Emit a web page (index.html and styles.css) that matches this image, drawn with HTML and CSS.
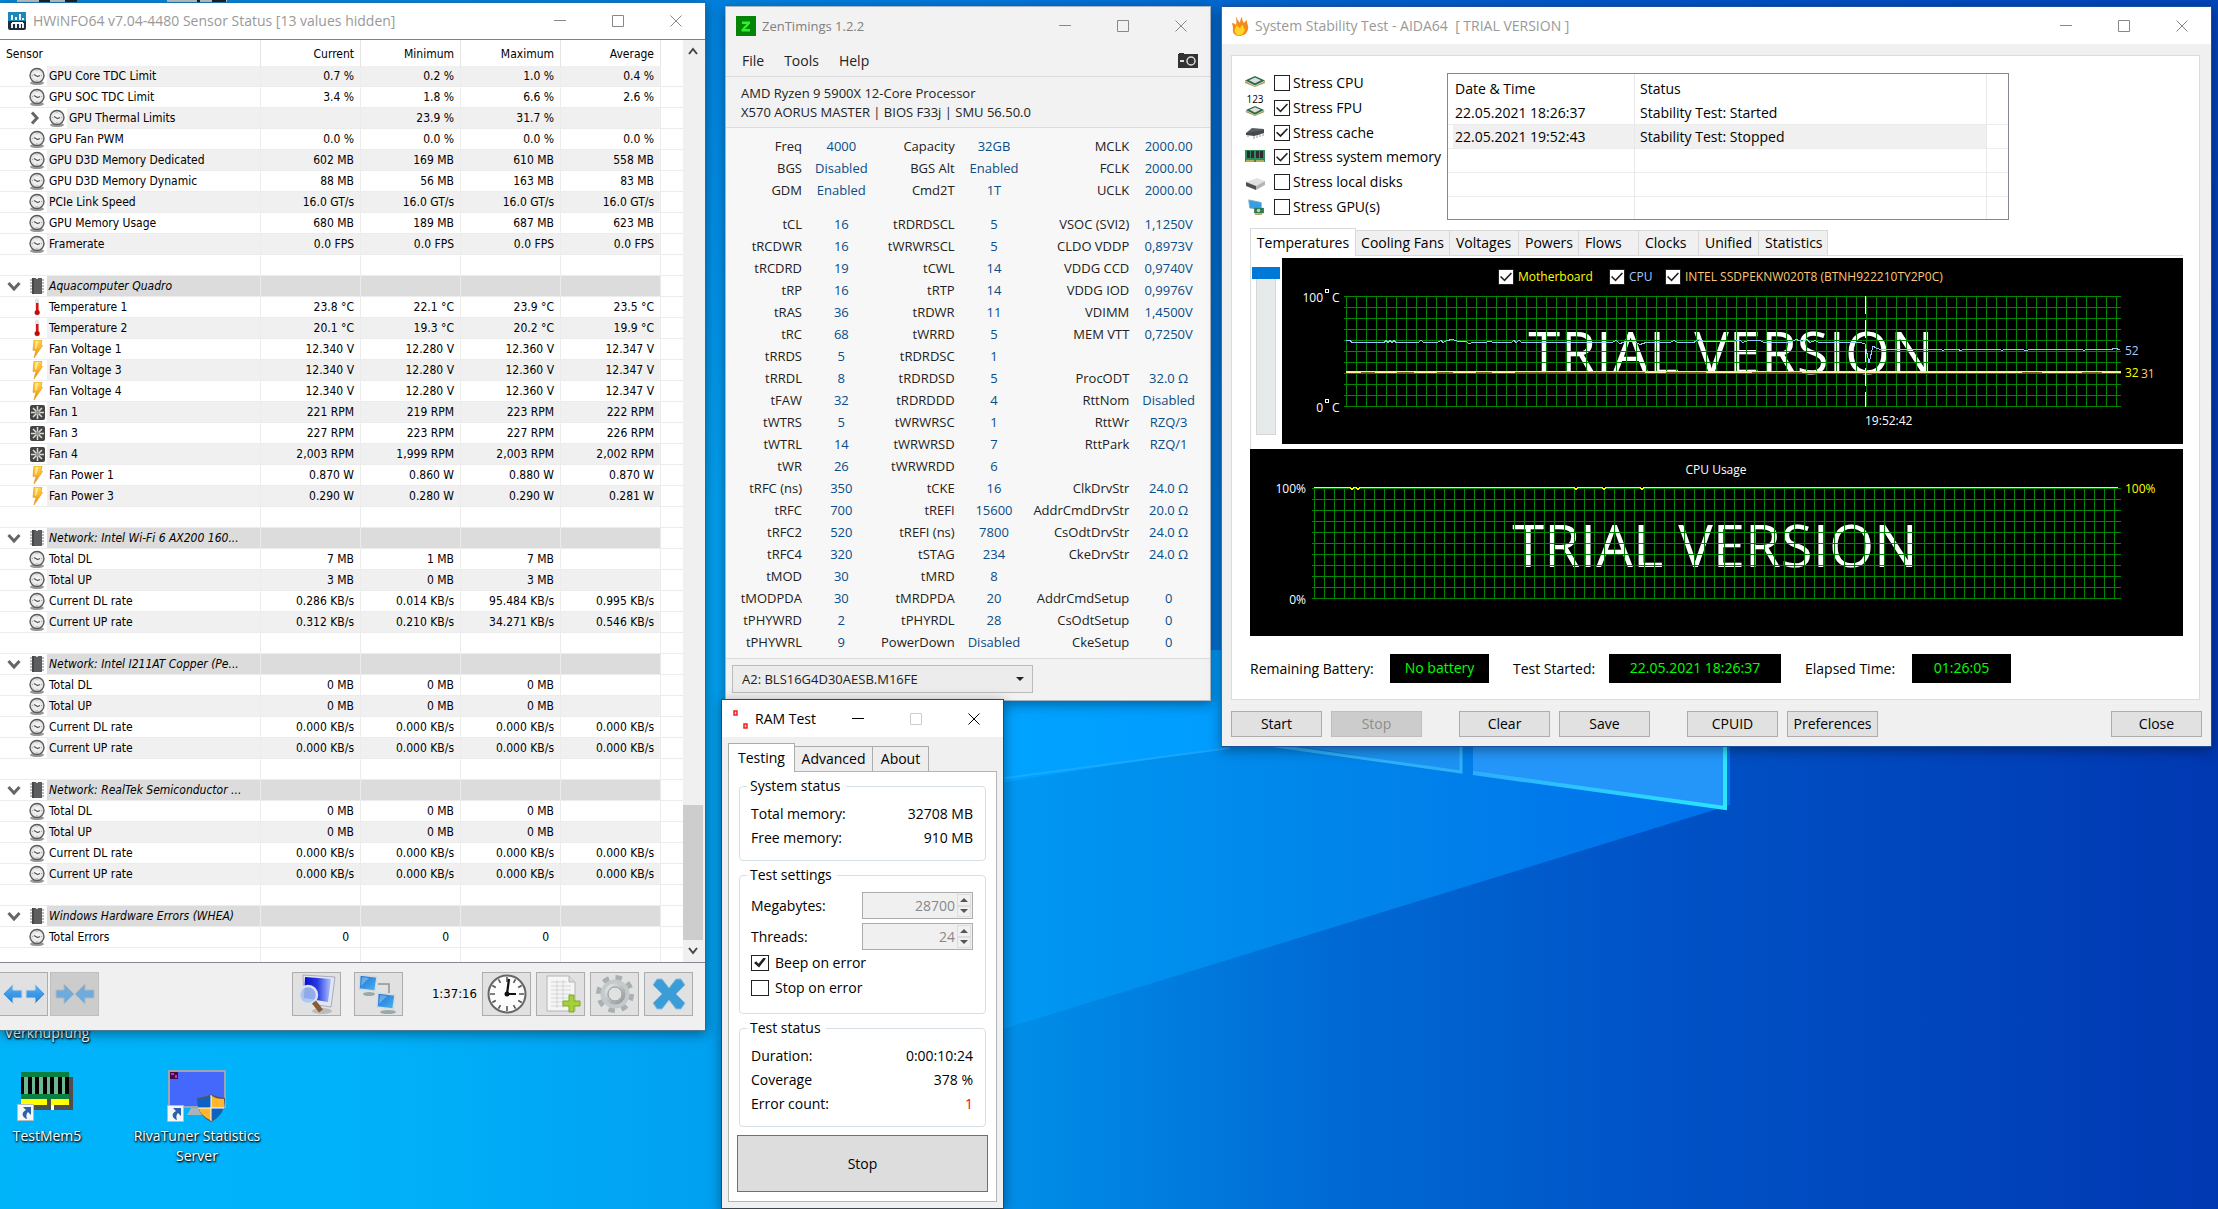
FILE: index.html
```html
<!DOCTYPE html>
<html lang="en">
<head>
<meta charset="utf-8">
<title>Desktop</title>
<link rel="stylesheet" href="styles.css">
</head>
<body>
<svg class="sprites" aria-hidden="true">
  <defs>
    <radialGradient id="gaugeFace"><stop offset="0" stop-color="#fff"/><stop offset="1" stop-color="#dcdcdc"/></radialGradient>
    <linearGradient id="boltFill" x1="0" y1="0" x2="0" y2="1"><stop offset="0" stop-color="#ffd84a"/><stop offset="1" stop-color="#f58a0a"/></linearGradient>
    <linearGradient id="screenFill" x1="0" y1="0" x2="1" y2="1"><stop offset="0" stop-color="#1a6fd0"/><stop offset="1" stop-color="#4fb4f4"/></linearGradient>
    <linearGradient id="deepScreen" x1="0" y1="0" x2="1" y2="0"><stop offset="0" stop-color="#0a0ac8"/><stop offset=".5" stop-color="#2a3ce0"/><stop offset="1" stop-color="#b0c4ff"/></linearGradient>
    <linearGradient id="steel" x1="0" y1="0" x2="1" y2="1"><stop offset="0" stop-color="#e6eaea"/><stop offset="1" stop-color="#8f9696"/></linearGradient>
    <linearGradient id="arrowFill" x1="0" y1="0" x2="0" y2="1"><stop offset="0" stop-color="#5fb2f2"/><stop offset="1" stop-color="#1c82dc"/></linearGradient>
  </defs>
  <symbol id="gauge" viewBox="0 0 16 18"><ellipse cx="8" cy="16" rx="7" ry="2" fill="#999"/><circle cx="8" cy="8.500" r="7" fill="url(#gaugeFace)" stroke="#5a5a5a" stroke-width="1.400"/><path d="M5 7.500 8.500 9.500 11 8.500" fill="none" stroke="#555" stroke-width="1.200"/><path d="M8 3v1M3 8.500h1M13 8.500h-1M8 14v-1" stroke="#aaa"/></symbol>
  <symbol id="chip" viewBox="0 0 16 18"><path d="M1 3h14M1 6h14M1 9h14M1 12h14M1 15h14" stroke="#a8a8a8" stroke-width="1.500"/><rect x="3" y="1" width="10" height="16" fill="#5c5e60"/><rect x="3" y="1" width="2" height="16" fill="#444648"/><path d="M7 1h2v1H7z" fill="#ddd"/></symbol>
  <symbol id="thermo" viewBox="0 0 16 18"><path d="M6 2q2-3 4 0v10.500a3 3 0 1 1-4 0z" fill="#e4e4e4"/><rect x="7" y="5" width="2.500" height="9" fill="#d01818"/><circle cx="8.200" cy="14.500" r="2.500" fill="#c80808"/></symbol>
  <symbol id="bolt" viewBox="0 0 16 18"><path d="M5 0h8l-1 5 1.500.5L5 18l2-8-3 .5z" fill="url(#boltFill)" stroke="#d8931c" stroke-width=".6"/><path d="M6.500 1h3l-2 7-1.500 1z" fill="#ffe98c"/></symbol>
  <symbol id="fan" viewBox="0 0 16 18"><rect x="1" y="2" width="15" height="15" rx="2" fill="#444"/><path d="M8.500 3v13M2 9.500h13M4 5l9 9M13 5l-9 9" stroke="#ddd" stroke-width="1.500"/><circle cx="8.500" cy="9.500" r="2.200" fill="#998"/></symbol>
  <symbol id="chev-down" viewBox="0 0 14 12"><path d="M1.500 3 7 9l5.500-6" fill="none" stroke="#666" stroke-width="3"/></symbol>
  <symbol id="chev-right" viewBox="0 0 12 14"><path d="M3 1.500 8 7l-5 5.500" fill="none" stroke="#666" stroke-width="3"/></symbol>
  <symbol id="win-min" viewBox="0 0 12 12"><path d="M0 5.500h12" stroke="currentColor"/></symbol>
  <symbol id="win-max" viewBox="0 0 12 12"><path d="M.5.5h11v11H.5z" fill="none" stroke="currentColor"/></symbol>
  <symbol id="win-close" viewBox="0 0 12 12"><path d="M.5.5l11 11M11.500.5l-11 11" stroke="currentColor" fill="none"/></symbol>
  <symbol id="shortcut" viewBox="0 0 17 17"><path d="M.5.5h16v16H.5z" fill="#f6f6f6" stroke="#bbb"/><path d="M6 3h8v8l-3-3c-2 2-2 4-1 7-4-1-7-6-1-9z" fill="#2b5fb0"/></symbol>
  <symbol id="cpu-flat" viewBox="0 0 20 12"><path d="M0 6 10 11l10-5v2l-10 4L0 8z" fill="#b39a58"/><path d="M0 5.500 10 1l10 4.500-10 5z" fill="#2e6b4a"/><path d="M4 5.300 10 2.500l6 2.800-6 3z" fill="#dcdfdf"/></symbol>
</svg>

<main class="desktop">
  <svg class="wallpaper" viewBox="0 0 2218 1209" preserveAspectRatio="none" aria-hidden="true">
    <defs>
      <linearGradient id="sky" gradientUnits="userSpaceOnUse" x1="0" y1="0" x2="2218" y2="0">
        <stop offset="0" stop-color="#00b4fa"/><stop offset=".16" stop-color="#00b2fa"/><stop offset=".33" stop-color="#009ff0"/><stop offset=".46" stop-color="#008de8"/><stop offset=".6" stop-color="#006ad4"/><stop offset=".75" stop-color="#0052c6"/><stop offset="1" stop-color="#0038b2"/>
      </linearGradient>
      <linearGradient id="topband" gradientUnits="userSpaceOnUse" x1="0" y1="0" x2="0" y2="500">
        <stop offset="0" stop-color="#0058c8" stop-opacity=".42"/><stop offset="1" stop-color="#0058c8" stop-opacity="0"/>
      </linearGradient>
      <linearGradient id="beam" gradientUnits="userSpaceOnUse" x1="1000" y1="0" x2="1730" y2="0">
        <stop offset="0" stop-color="#0098f2"/><stop offset=".45" stop-color="#0086ea"/><stop offset="1" stop-color="#0070ec"/>
      </linearGradient>
      <linearGradient id="beam2" gradientUnits="userSpaceOnUse" x1="700" y1="0" x2="1240" y2="0">
        <stop offset="0" stop-color="#00a4f8" stop-opacity="0"/><stop offset=".5" stop-color="#00a4ff"/><stop offset="1" stop-color="#009cff"/>
      </linearGradient>
      <linearGradient id="paneEdge" gradientUnits="userSpaceOnUse" x1="1470" y1="0" x2="1726" y2="0">
        <stop offset="0" stop-color="#2cacff"/><stop offset="1" stop-color="#2ae6ff"/>
      </linearGradient>
    </defs>
    <rect width="2218" height="1209" fill="url(#sky)"/>
    <rect width="2218" height="500" fill="url(#topband)"/>
    <path d="M1000 650h730v155L1000 1030z" fill="url(#beam)"/>
    <path d="M700 650h540v95L700 830z" fill="url(#beam2)"/>
    <path d="M1005 778 1230 748" stroke="#2ab0ff" stroke-opacity=".6" stroke-width="2"/>
    <path d="M1262 740h199v32z" fill="#1c92f2"/><path d="M1262 744 1461 772v-30" fill="none" stroke="#30b0f8" stroke-width="3"/>
    <path d="M1473 740h253v69l-253-36z" fill="#2496fa"/><path d="M1473 773 1725 808V740" fill="none" stroke="url(#paneEdge)" stroke-width="4"/>
  </svg>

  <svg class="icon-tops" viewBox="0 0 230 2" aria-hidden="true"><path d="M17 0h60v2H17zM167 0h60v2h-60z" fill="#c4c8c8"/><path d="M39 0h11v2H39zM65 0h12v2H65zM197 0h3v2h-3zM212 0h14v2h-14z" fill="#222"/></svg>

  <a class="shortcut shortcut-hidden" href="#">Verknüpfung</a>
  <a class="shortcut shortcut-mem" href="#">
    <svg viewBox="0 0 60 52"><path d="M8 7h48v33H8z" fill="#4e4e4e"/><path d="M4 2h48v37H4z" fill="#0a8040"/><path d="M4 7h48v17H4z" fill="#6cb890"/><path d="M4 7h3v17H4zM11 7h4v17h-4zM18 7h4v17h-4zM26 7h4v17h-4zM33 7h4v17h-4zM41 7h4v17h-4zM48 7h4v17h-4z" fill="#000"/><path d="M4 29h26v6H4zM34 29h18v6H34z" fill="#ff0"/><path d="M4 35h48v5H4zM30 29h4v6h-4z" fill="#4e4e4e"/><path d="M34 35h3v5h-3z" fill="#fff"/><use href="#shortcut" x="0" y="34" width="17" height="17"/></svg>
    TestMem5</a>
  <a class="shortcut shortcut-riva" href="#">
    <svg viewBox="0 0 60 52"><path d="M1 0h58v38H1z" fill="#9aa6b4"/><path d="M3 2h54v34H3z" fill="#4468fc"/><path d="M3 2h8v7H3z" fill="#401040"/><path d="M4 3h3v2H4zM8 5h2v3H8z" fill="#e020e0"/><path d="M24 38h14l2 7H20z" fill="#a8b4bc"/><path d="M44 24c5 3 9 3 14 4 0 10-3 18-14 24-11-6-14-14-14-24 5-1 9-1 14-4z" fill="#555"/><path d="M44 25.500V38H31v-9q8 0 13-3.500z" fill="#0c62c4"/><path d="M44 25.500V38h13v-9q-8 0-13-3.500z" fill="#ffb52e"/><path d="M31.500 38H44v12.500Q34 46 31.500 38z" fill="#ffb52e"/><path d="M56.500 38H44v12.500Q54 46 56.500 38z" fill="#0c62c4"/><path d="M44 25v26M31 38h26" stroke="#fff"/><use href="#shortcut" x="0" y="35" width="17" height="17"/></svg>
    RivaTuner Statistics Server</a>

  <!-- Sensor status -->
  <section class="window hwinfo" aria-label="HWiNFO64 Sensor Status">
    <header class="titlebar">
      <svg class="app-icon" viewBox="0 0 18 18"><rect width="18" height="18" rx="2" fill="#1c2c3a"/><path d="M0 0h18v9H0z" fill="#1f86b8"/><path d="M4 3v5M8 5v3M12 2v6M15 6v2M4 11v5M8 11v5M12 11v5M15 11v5M4 11h11" stroke="#fff" stroke-width="1.800"/></svg>
      <h1>HWiNFO64 v7.04-4480 Sensor Status [13 values hidden]</h1>
      <div class="controls"><button aria-label="Minimize"><svg><use href="#win-min"/></svg></button><button aria-label="Maximize"><svg><use href="#win-max"/></svg></button><button aria-label="Close"><svg><use href="#win-close"/></svg></button></div>
    </header>
    <div class="sensor-area">
      <table class="sensors">
        <colgroup><col class="c-tree"><col class="c-name"><col class="c-val"><col class="c-val"><col class="c-val"><col class="c-val"><col></colgroup>
        <thead><tr><th colspan="2">Sensor</th><th>Current</th><th>Minimum</th><th>Maximum</th><th>Average</th><th></th></tr></thead>
        <tbody>
          <tr><td><svg><use href="#gauge"/></svg></td><td>GPU Core TDC Limit</td><td>0.7 %</td><td>0.2 %</td><td>1.0 %</td><td>0.4 %</td><td></td></tr>
          <tr><td><svg><use href="#gauge"/></svg></td><td>GPU SOC TDC Limit</td><td>3.4 %</td><td>1.8 %</td><td>6.6 %</td><td>2.6 %</td><td></td></tr>
          <tr><td><svg class="expander"><use href="#chev-right"/></svg></td><td><span class="nested"><svg><use href="#gauge"/></svg></span>GPU Thermal Limits</td><td></td><td>23.9 %</td><td>31.7 %</td><td></td><td></td></tr>
          <tr><td><svg><use href="#gauge"/></svg></td><td>GPU Fan PWM</td><td>0.0 %</td><td>0.0 %</td><td>0.0 %</td><td>0.0 %</td><td></td></tr>
          <tr><td><svg><use href="#gauge"/></svg></td><td>GPU D3D Memory Dedicated</td><td>602 MB</td><td>169 MB</td><td>610 MB</td><td>558 MB</td><td></td></tr>
          <tr><td><svg><use href="#gauge"/></svg></td><td>GPU D3D Memory Dynamic</td><td>88 MB</td><td>56 MB</td><td>163 MB</td><td>83 MB</td><td></td></tr>
          <tr><td><svg><use href="#gauge"/></svg></td><td>PCIe Link Speed</td><td>16.0 GT/s</td><td>16.0 GT/s</td><td>16.0 GT/s</td><td>16.0 GT/s</td><td></td></tr>
          <tr><td><svg><use href="#gauge"/></svg></td><td>GPU Memory Usage</td><td>680 MB</td><td>189 MB</td><td>687 MB</td><td>623 MB</td><td></td></tr>
          <tr><td><svg><use href="#gauge"/></svg></td><td>Framerate</td><td>0.0 FPS</td><td>0.0 FPS</td><td>0.0 FPS</td><td>0.0 FPS</td><td></td></tr>
          <tr><td></td><td></td><td></td><td></td><td></td><td></td><td></td></tr>
          <tr class="group"><td><svg class="toggle"><use href="#chev-down"/></svg><svg><use href="#chip"/></svg></td><td>Aquacomputer Quadro</td><td></td><td></td><td></td><td></td><td></td></tr>
          <tr><td><svg><use href="#thermo"/></svg></td><td>Temperature 1</td><td>23.8 °C</td><td>22.1 °C</td><td>23.9 °C</td><td>23.5 °C</td><td></td></tr>
          <tr><td><svg><use href="#thermo"/></svg></td><td>Temperature 2</td><td>20.1 °C</td><td>19.3 °C</td><td>20.2 °C</td><td>19.9 °C</td><td></td></tr>
          <tr><td><svg><use href="#bolt"/></svg></td><td>Fan Voltage 1</td><td>12.340 V</td><td>12.280 V</td><td>12.360 V</td><td>12.347 V</td><td></td></tr>
          <tr><td><svg><use href="#bolt"/></svg></td><td>Fan Voltage 3</td><td>12.340 V</td><td>12.280 V</td><td>12.360 V</td><td>12.347 V</td><td></td></tr>
          <tr><td><svg><use href="#bolt"/></svg></td><td>Fan Voltage 4</td><td>12.340 V</td><td>12.280 V</td><td>12.360 V</td><td>12.347 V</td><td></td></tr>
          <tr><td><svg><use href="#fan"/></svg></td><td>Fan 1</td><td>221 RPM</td><td>219 RPM</td><td>223 RPM</td><td>222 RPM</td><td></td></tr>
          <tr><td><svg><use href="#fan"/></svg></td><td>Fan 3</td><td>227 RPM</td><td>223 RPM</td><td>227 RPM</td><td>226 RPM</td><td></td></tr>
          <tr><td><svg><use href="#fan"/></svg></td><td>Fan 4</td><td>2,003 RPM</td><td>1,999 RPM</td><td>2,003 RPM</td><td>2,002 RPM</td><td></td></tr>
          <tr><td><svg><use href="#bolt"/></svg></td><td>Fan Power 1</td><td>0.870 W</td><td>0.860 W</td><td>0.880 W</td><td>0.870 W</td><td></td></tr>
          <tr><td><svg><use href="#bolt"/></svg></td><td>Fan Power 3</td><td>0.290 W</td><td>0.280 W</td><td>0.290 W</td><td>0.281 W</td><td></td></tr>
          <tr><td></td><td></td><td></td><td></td><td></td><td></td><td></td></tr>
          <tr class="group"><td><svg class="toggle"><use href="#chev-down"/></svg><svg><use href="#chip"/></svg></td><td>Network: Intel Wi-Fi 6 AX200 160...</td><td></td><td></td><td></td><td></td><td></td></tr>
          <tr><td><svg><use href="#gauge"/></svg></td><td>Total DL</td><td>7 MB</td><td>1 MB</td><td>7 MB</td><td></td><td></td></tr>
          <tr><td><svg><use href="#gauge"/></svg></td><td>Total UP</td><td>3 MB</td><td>0 MB</td><td>3 MB</td><td></td><td></td></tr>
          <tr><td><svg><use href="#gauge"/></svg></td><td>Current DL rate</td><td>0.286 KB/s</td><td>0.014 KB/s</td><td>95.484 KB/s</td><td>0.995 KB/s</td><td></td></tr>
          <tr><td><svg><use href="#gauge"/></svg></td><td>Current UP rate</td><td>0.312 KB/s</td><td>0.210 KB/s</td><td>34.271 KB/s</td><td>0.546 KB/s</td><td></td></tr>
          <tr><td></td><td></td><td></td><td></td><td></td><td></td><td></td></tr>
          <tr class="group"><td><svg class="toggle"><use href="#chev-down"/></svg><svg><use href="#chip"/></svg></td><td>Network: Intel I211AT Copper (Pe...</td><td></td><td></td><td></td><td></td><td></td></tr>
          <tr><td><svg><use href="#gauge"/></svg></td><td>Total DL</td><td>0 MB</td><td>0 MB</td><td>0 MB</td><td></td><td></td></tr>
          <tr><td><svg><use href="#gauge"/></svg></td><td>Total UP</td><td>0 MB</td><td>0 MB</td><td>0 MB</td><td></td><td></td></tr>
          <tr><td><svg><use href="#gauge"/></svg></td><td>Current DL rate</td><td>0.000 KB/s</td><td>0.000 KB/s</td><td>0.000 KB/s</td><td>0.000 KB/s</td><td></td></tr>
          <tr><td><svg><use href="#gauge"/></svg></td><td>Current UP rate</td><td>0.000 KB/s</td><td>0.000 KB/s</td><td>0.000 KB/s</td><td>0.000 KB/s</td><td></td></tr>
          <tr><td></td><td></td><td></td><td></td><td></td><td></td><td></td></tr>
          <tr class="group"><td><svg class="toggle"><use href="#chev-down"/></svg><svg><use href="#chip"/></svg></td><td>Network: RealTek Semiconductor ...</td><td></td><td></td><td></td><td></td><td></td></tr>
          <tr><td><svg><use href="#gauge"/></svg></td><td>Total DL</td><td>0 MB</td><td>0 MB</td><td>0 MB</td><td></td><td></td></tr>
          <tr><td><svg><use href="#gauge"/></svg></td><td>Total UP</td><td>0 MB</td><td>0 MB</td><td>0 MB</td><td></td><td></td></tr>
          <tr><td><svg><use href="#gauge"/></svg></td><td>Current DL rate</td><td>0.000 KB/s</td><td>0.000 KB/s</td><td>0.000 KB/s</td><td>0.000 KB/s</td><td></td></tr>
          <tr><td><svg><use href="#gauge"/></svg></td><td>Current UP rate</td><td>0.000 KB/s</td><td>0.000 KB/s</td><td>0.000 KB/s</td><td>0.000 KB/s</td><td></td></tr>
          <tr><td></td><td></td><td></td><td></td><td></td><td></td><td></td></tr>
          <tr class="group"><td><svg class="toggle"><use href="#chev-down"/></svg><svg><use href="#chip"/></svg></td><td>Windows Hardware Errors (WHEA)</td><td></td><td></td><td></td><td></td><td></td></tr>
          <tr class="count"><td><svg><use href="#gauge"/></svg></td><td>Total Errors</td><td>0</td><td>0</td><td>0</td><td></td><td></td></tr>
        </tbody>
        <tfoot><tr><td></td><td></td><td></td><td></td><td></td><td></td><td></td></tr></tfoot>
      </table>
      <div class="scrollbar">
        <button aria-label="Scroll up"><svg viewBox="0 0 10 8"><path d="M1 7l4-5 4 5" fill="none" stroke="#444" stroke-width="2"/></svg></button>
        <div class="thumb"></div>
        <button aria-label="Scroll down"><svg viewBox="0 0 10 8"><path d="M1 1l4 5 4-5" fill="none" stroke="#444" stroke-width="2"/></svg></button>
      </div>
    </div>
    <footer class="toolbar">
      <button class="first" aria-label="Expand columns"><svg viewBox="0 0 44 36"><path d="M1 18 11 8v6h9v8h-9v6zM43 18 33 8v6h-9v8h9v6z" fill="url(#arrowFill)" stroke="#cfd8e0"/></svg></button>
      <button class="off" aria-label="Shrink columns" disabled><svg viewBox="0 0 44 36"><path d="M21 18 11 8v6H3v8h8v6zM22 18 32 8v6h9v8h-9v6z" fill="#6fabdc" stroke="#b4b8bc"/></svg></button>
      <span class="fill"></span>
      <button class="lookup" aria-label="Sensor details"><svg viewBox="0 0 44 40"><path d="M8 1 40 3l-4 30-27-4z" fill="#dfe6f4" stroke="#aab"/><path d="M10 3 36 5l-3 23-24-4z" fill="url(#deepScreen)"/><ellipse cx="27" cy="37" rx="10" ry="3" fill="#bbb"/><circle cx="13" cy="21" r="9" fill="#a6c4f0" fill-opacity=".85" stroke="#dde2ea" stroke-width="2.500"/><path d="M19 28l7 9" stroke="#8a5a34" stroke-width="5"/></svg></button>
      <button aria-label="Remote sensors"><svg viewBox="0 0 44 40"><path d="M3 1 20 3l-2 14-16-2z" fill="url(#screenFill)" stroke="#d4dade" stroke-width="1.500"/><path d="M5 3 12 4 4 12z" fill="#9cd4fa" fill-opacity=".5"/><path d="M21 19 38 21l-2 14-16-2z" fill="url(#screenFill)" stroke="#d4dade" stroke-width="1.500"/><path d="M23 21l7 1-8 8z" fill="#9cd4fa" fill-opacity=".5"/><ellipse cx="12" cy="20" rx="6" ry="2" fill="#9aa"/><ellipse cx="31" cy="38" rx="8" ry="2" fill="#9aa"/><path d="M21 10h11v9" fill="none" stroke="#8a9298" stroke-width="1.500"/></svg></button>
      <output>1:37:16</output>
      <button aria-label="Reset clock"><svg viewBox="0 0 44 40"><circle cx="22" cy="20" r="18.500" fill="#fdfdfd" stroke="#666" stroke-width="2"/><path d="M22 3v5M22 32v5M5 20h5M34 20h5M13.500 5.300l2 3.500M30.500 5.300l-2 3.500M13.500 34.700l2-3.500M30.500 34.700l-2-3.500M7.300 11.500l3.500 2M36.700 11.500l-3.500 2M7.300 28.500l3.500-2M36.700 28.500l-3.500-2" stroke="#555" stroke-width="1.600"/><path d="M24 5 22 20h9" fill="none" stroke="#111" stroke-width="2.200"/><circle cx="22" cy="20" r="2.500" fill="#111"/></svg></button>
      <button aria-label="Log to file"><svg viewBox="0 0 44 40"><path d="M8 2h22l6 6v29H8z" fill="#f6f6f6" stroke="#b4b4b4"/><path d="M30 2v6h6" fill="#ddd" stroke="#b4b4b4"/><path d="M12 8h16M12 12h20M12 16h20M12 20h20M12 24h20M12 28h20M12 32h12M18 6v28M24 6v28" stroke="#d4d4d4"/><path d="M30 21h5v6h6v5h-6v6h-5v-6h-6v-5h6z" fill="#a4d038" stroke="#7ea820"/></svg></button>
      <button aria-label="Settings"><svg viewBox="0 0 44 40"><circle cx="22" cy="20" r="15.500" fill="none" stroke="#a8b0b0" stroke-width="7" stroke-dasharray="6 6.174"/><circle cx="22" cy="20" r="11" fill="none" stroke="#c4cacc" stroke-width="7"/><circle cx="22" cy="20" r="9" fill="none" stroke="url(#steel)" stroke-width="3"/><circle cx="22" cy="20" r="7" fill="#e1e1e1" stroke="#909898"/></svg></button>
      <button aria-label="Close sensors"><svg viewBox="0 0 44 40"><path d="M10 5h5l7 9 7-9h5l4 6-9 9 9 9-4 6h-5l-7-9-7 9h-5l-4-6 9-9-9-9z" fill="#3c9cd8" stroke="#8cc0e0"/></svg></button>
    </footer>
  </section>

  <!-- Memory timings -->
  <section class="window zen" aria-label="ZenTimings">
    <header class="titlebar">
      <svg class="app-icon" viewBox="0 0 20 20"><rect width="20" height="20" fill="#068406"/><path d="M6 5.500h8v2L9 13h5v2.500H5.500v-2l5-5.500H6z" fill="#30f030"/></svg>
      <h1>ZenTimings 1.2.2</h1>
      <div class="controls"><button aria-label="Minimize"><svg><use href="#win-min"/></svg></button><button aria-label="Maximize"><svg><use href="#win-max"/></svg></button><button aria-label="Close"><svg><use href="#win-close"/></svg></button></div>
    </header>
    <nav class="menu"><button>File</button><button>Tools</button><button>Help</button>
      <button class="camera" aria-label="Screenshot"><svg viewBox="0 0 20 15"><path d="M1 0h5v1h14v14H0V1h1z" fill="#333"/><circle cx="13" cy="8" r="4" fill="#333" stroke="#ddd" stroke-width="1.500"/><path d="M2 7h4v2H2z" fill="#ddd"/></svg></button></nav>
    <div class="cpu-info"><p>AMD Ryzen 9 5900X 12-Core Processor</p><p>X570 AORUS MASTER | BIOS F33j | SMU 56.50.0</p></div>
    <div class="timings-wrap">
      <table class="timings">
        <colgroup><col class="t1"><col class="tv"><col class="t2"><col class="tv"><col class="t3"><col class="tv"></colgroup>
        <tbody>
          <tr><th>Freq</th><td>4000</td><th>Capacity</th><td>32GB</td><th>MCLK</th><td>2000.00</td></tr>
          <tr><th>BGS</th><td>Disabled</td><th>BGS Alt</th><td>Enabled</td><th>FCLK</th><td>2000.00</td></tr>
          <tr><th>GDM</th><td>Enabled</td><th>Cmd2T</th><td>1T</td><th>UCLK</th><td>2000.00</td></tr>
          <tr class="gap"><td colspan="6"></td></tr>
          <tr><th>tCL</th><td>16</td><th>tRDRDSCL</th><td>5</td><th>VSOC (SVI2)</th><td>1,1250V</td></tr>
          <tr><th>tRCDWR</th><td>16</td><th>tWRWRSCL</th><td>5</td><th>CLDO VDDP</th><td>0,8973V</td></tr>
          <tr><th>tRCDRD</th><td>19</td><th>tCWL</th><td>14</td><th>VDDG CCD</th><td>0,9740V</td></tr>
          <tr><th>tRP</th><td>16</td><th>tRTP</th><td>14</td><th>VDDG IOD</th><td>0,9976V</td></tr>
          <tr><th>tRAS</th><td>36</td><th>tRDWR</th><td>11</td><th>VDIMM</th><td>1,4500V</td></tr>
          <tr><th>tRC</th><td>68</td><th>tWRRD</th><td>5</td><th>MEM VTT</th><td>0,7250V</td></tr>
          <tr><th>tRRDS</th><td>5</td><th>tRDRDSC</th><td>1</td><th></th><td></td></tr>
          <tr><th>tRRDL</th><td>8</td><th>tRDRDSD</th><td>5</td><th>ProcODT</th><td>32.0 Ω</td></tr>
          <tr><th>tFAW</th><td>32</td><th>tRDRDDD</th><td>4</td><th>RttNom</th><td>Disabled</td></tr>
          <tr><th>tWTRS</th><td>5</td><th>tWRWRSC</th><td>1</td><th>RttWr</th><td>RZQ/3</td></tr>
          <tr><th>tWTRL</th><td>14</td><th>tWRWRSD</th><td>7</td><th>RttPark</th><td>RZQ/1</td></tr>
          <tr><th>tWR</th><td>26</td><th>tWRWRDD</th><td>6</td><th></th><td></td></tr>
          <tr><th>tRFC (ns)</th><td>350</td><th>tCKE</th><td>16</td><th>ClkDrvStr</th><td>24.0 Ω</td></tr>
          <tr><th>tRFC</th><td>700</td><th>tREFI</th><td>15600</td><th>AddrCmdDrvStr</th><td>20.0 Ω</td></tr>
          <tr><th>tRFC2</th><td>520</td><th>tREFI (ns)</th><td>7800</td><th>CsOdtDrvStr</th><td>24.0 Ω</td></tr>
          <tr><th>tRFC4</th><td>320</td><th>tSTAG</th><td>234</td><th>CkeDrvStr</th><td>24.0 Ω</td></tr>
          <tr><th>tMOD</th><td>30</td><th>tMRD</th><td>8</td><th></th><td></td></tr>
          <tr><th>tMODPDA</th><td>30</td><th>tMRDPDA</th><td>20</td><th>AddrCmdSetup</th><td>0</td></tr>
          <tr><th>tPHYWRD</th><td>2</td><th>tPHYRDL</th><td>28</td><th>CsOdtSetup</th><td>0</td></tr>
          <tr><th>tPHYWRL</th><td>9</td><th>PowerDown</th><td>Disabled</td><th>CkeSetup</th><td>0</td></tr>
        </tbody>
      </table>
    </div>
    <footer class="module">
      <div class="picker"><select aria-label="Memory module"><option>A2: BLS16G4D30AESB.M16FE</option></select><svg viewBox="0 0 8 4"><path d="M0 0h8L4 4z" fill="#222"/></svg></div>
    </footer>
  </section>

  <!-- Stability test -->
  <section class="window aida" aria-label="System Stability Test">
    <header class="titlebar">
      <svg class="app-icon" viewBox="0 0 17 20"><path d="M4 0c1 4 3 5 4 7 0-3 1-5 2-6 0 3 1 5 2 6 1-2 2-2 3-3-1 3 2 5 1 9-1 5-5 7-9 7s-7-3-6-8C1 10 0 8 0 7c2 0 3 1 4 2C5 6 4 3 4 0z" fill="#f58a1c"/><path d="M4 18c-3-4 0-7 1-9 1 2 2 2 3 3 1-2 2-3 3-3 0 3 3 4 1 7-2 4-6 4-8 2z" fill="#ffd628"/></svg>
      <h1>System Stability Test - AIDA64&nbsp; [ TRIAL VERSION ]</h1>
      <div class="controls"><button aria-label="Minimize"><svg><use href="#win-min"/></svg></button><button aria-label="Maximize"><svg><use href="#win-max"/></svg></button><button aria-label="Close"><svg><use href="#win-close"/></svg></button></div>
    </header>
    <div class="aida-panel">
      <div class="aida-top">
        <div class="stress">
          <label><svg viewBox="0 0 20 16"><use href="#cpu-flat" width="20" height="12"/></svg><input type="checkbox">Stress CPU</label>
          <label><svg viewBox="0 0 20 16"><text x="10" y="3" class="digits">123</text><use href="#cpu-flat" y="5" width="20" height="11"/></svg><input type="checkbox" checked>Stress FPU</label>
          <label><svg viewBox="0 0 20 16"><path d="M1 8 7 3l12 1v3l-6 3z" fill="#5a5c60"/><path d="M1 8v2l8 1 10-3V5" fill="#45484c"/><path d="M9 11v3M12 10v3M15 9v3M18 8v3M3 10v2" stroke="#999"/></svg><input type="checkbox" checked>Stress cache</label>
          <label><svg viewBox="0 0 20 16"><path d="M0 1h20v12H0z" fill="#2f8a5e"/><path d="M2 2h3v7H2zM6 2h3v7H6zM11 2h3v7h-3zM15 2h3v7h-3z" fill="#2c2c30"/><path d="M1 11h8v2H1zM11 11h8v2h-8z" fill="#b8a858"/></svg><input type="checkbox" checked>Stress system memory</label>
          <label><svg viewBox="0 0 20 16"><path d="M1 8 12 4l8 3-9 5z" fill="#e2e2e2"/><path d="M1 8l10 4v4L1 12z" fill="#4c524c"/><path d="M11 12l9-5v4l-9 5z" fill="#b4b4b4"/></svg><input type="checkbox">Stress local disks</label>
          <label><svg viewBox="0 0 20 18"><path d="M3 1 17 4v8L4 10z" fill="#34a0e4" stroke="#7aa8c8"/><path d="M9 10h11v6H9z" fill="#2e7a50"/><circle cx="14" cy="13" r="2" fill="#bcd"/><path d="M10 16h8v2h-8z" fill="#b8a858"/></svg><input type="checkbox">Stress GPU(s)</label>
        </div>
        <div class="log">
          <table>
            <colgroup><col class="l1"><col class="l2"><col></colgroup>
            <thead><tr><th>Date &amp; Time</th><th>Status</th><th></th></tr></thead>
            <tbody>
              <tr><td>22.05.2021 18:26:37</td><td>Stability Test: Started</td><td></td></tr>
              <tr class="sel"><td>22.05.2021 19:52:43</td><td>Stability Test: Stopped</td><td></td></tr>
              <tr><td></td><td></td><td></td></tr>
              <tr><td></td><td></td><td></td></tr>
              <tr><td></td><td></td><td></td></tr>
            </tbody>
          </table>
        </div>
      </div>
      <div class="tabs" role="tablist">
        <button role="tab" class="active">Temperatures</button><button role="tab" class="w94">Cooling Fans</button><button role="tab" class="w69">Voltages</button><button role="tab" class="w60">Powers</button><button role="tab" class="w60">Flows</button><button role="tab" class="w60">Clocks</button><button role="tab" class="w60">Unified</button><button role="tab" class="w69">Statistics</button>
      </div>
      <div class="graph-page">
        <div class="slider"><div class="slider-thumb"></div><div class="slider-track"></div></div>
        <div class="graph">
          <div class="legend">
            <label class="l-mb"><input type="checkbox" checked>Motherboard</label>
            <label class="l-cpu"><input type="checkbox" checked>CPU</label>
            <label class="l-ssd"><input type="checkbox" checked>INTEL SSDPEKNW020T8 (BTNH922210TY2P0C)</label>
          </div>
          <svg class="plot" viewBox="0 0 901 156">
            <defs>
              <pattern id="grid1" patternUnits="userSpaceOnUse" x="64" y="8" width="10" height="11"><path d="M0 0h10v1H1v10H0z" fill="#008600"/></pattern>
              <pattern id="rows1" patternUnits="userSpaceOnUse" x="0" y="8" width="10" height="11"><path d="M0 0h10v1H0z" fill="#008600"/></pattern>
            </defs>
            <text x="449" y="86" class="trial">TRIAL VERSION</text>
            <rect x="64" y="8" width="771" height="111" fill="url(#grid1)"/>
            <rect x="62" y="8" width="777" height="111" fill="url(#rows1)"/>
            <path d="M583.500 8v111" stroke="#fff" stroke-dasharray="18 6"/>
            <path d="M64 84.500h775" stroke="#fff0a0"/>
            <path d="M79 84.500h14M115 84.500h17M155 84.500h16M194 84.500h16M233 84.500h130M384 84.500h40M470 84.500h50M740 84.500h20M800 84.500h20" stroke="#7a6a20"/>
            <path d="M64 83.500h775" stroke="#ff0"/>
            <path d="M64 52.500h4L70 54.500H102L104 52.500 106 54.500 108 52.500 110 54.500 112 52.500 114 54.500H136L139 52.500 142 54.500H155L159 52.500 161 54.500 165 52.500 170 51.500 177 53.500H184L187 55.500 192 54.500H202L208 53.500 212 54.500H229L232 52.500 234 54.500 237 52.500 240 54.500H330L334 52.500 338 55.500 344 53.500H352L358 56.500 364 54.500H388L392 52.500 396 54.500H412L416 51.500 422 53.500H450L458 52.500 461 54.500 466 52.500H478L482 54.500H508L514 51.500 520 53.500 525 51.500 528 54.500 533 52.500 537 54.500H578L583 56 587 75 591 58 594 60 598 61.500H659L661 62.500 663 61.500H676L679 62.500 681 61.500H718L720 62.500 722 61.500H740L744 62.500 748 61.500H800L802 62.500 804 61.500H828L833 60.500 838 61.500" fill="none" stroke="#9cc4ff"/>
            <g class="axis"><text x="41" y="14" class="end">100</text><text x="50" y="14">C</text><text x="41" y="124" class="end">0</text><text x="50" y="124">C</text><circle cx="45" cy="3" r="2" fill="none" stroke="#fff"/><circle cx="45" cy="113" r="2" fill="none" stroke="#fff"/>
            <text x="583" y="137">19:52:42</text><text x="843" y="67" class="blue">52</text><text x="843" y="89" class="yellow">32</text><text x="859" y="90" class="orange">31</text></g>
          </svg>
        </div>
      </div>
      <svg class="plot usage" viewBox="0 0 933 187">
        <defs>
          <pattern id="grid2" patternUnits="userSpaceOnUse" x="64" y="39" width="10" height="11"><path d="M0 0h10v1H1v10H0z" fill="#008600"/></pattern>
          <pattern id="rows2" patternUnits="userSpaceOnUse" x="0" y="39" width="10" height="11"><path d="M0 0h10v1H0z" fill="#008600"/></pattern>
        </defs>
        <text x="465" y="118" class="trial">TRIAL VERSION</text>
        <rect x="64" y="39" width="801" height="111" fill="url(#grid2)"/>
        <rect x="62" y="39" width="809" height="111" fill="url(#rows2)"/>
        <path d="M64 38.500h36l2 2 2-2h2l2 2 2-2h214l2 2 2-2h24l2 2 2-2h34l2 2 2-2h474" fill="none" stroke="#ff0"/>
        <g class="axis"><text x="466" y="25" class="mid">CPU Usage</text><text x="56" y="44" class="end">100%</text><text x="56" y="155" class="end">0%</text><text x="875" y="44" class="yellow">100%</text></g>
      </svg>
      <div class="run-info">
        <span class="i1">Remaining Battery:</span><output class="o1">No battery</output>
        <span class="i2">Test Started:</span><output class="o2">22.05.2021 18:26:37</output>
        <span class="i3">Elapsed Time:</span><output class="o1">01:26:05</output>
      </div>
    </div>
    <footer class="aida-buttons">
      <div><button>Start</button><button disabled>Stop</button></div>
      <div><button>Clear</button><button>Save</button></div>
      <div><button>CPUID</button><button>Preferences</button></div>
      <button class="close">Close</button>
    </footer>
  </section>

  <!-- RAM test -->
  <section class="window ram" aria-label="RAM Test">
    <header class="titlebar">
      <svg class="app-icon" viewBox="0 0 20 20"><path d="M2 2h3v4H2zM12 15h3v4h-3z" fill="#fcc" stroke="#f02020" stroke-width="1.500"/></svg>
      <h1>RAM Test</h1>
      <div class="controls"><button aria-label="Minimize"><svg><use href="#win-min"/></svg></button><button aria-label="Maximize" disabled><svg><use href="#win-max"/></svg></button><button aria-label="Close"><svg><use href="#win-close"/></svg></button></div>
    </header>
    <div class="ram-body">
      <div class="ram-tabs" role="tablist"><button role="tab" class="active">Testing</button><button role="tab" class="adv">Advanced</button><button role="tab" class="abt">About</button></div>
      <div class="ram-page">
        <fieldset class="f-sys"><legend>System status</legend>
          <p><span>Total memory:</span><span>32708 MB</span></p>
          <p><span>Free memory:</span><span>910 MB</span></p>
        </fieldset>
        <fieldset class="f-set"><legend>Test settings</legend>
          <div class="fields">
            <div class="field"><label for="mb">Megabytes:</label><span class="spin"><input id="mb" value="28700" disabled><span class="arrows"><button aria-label="More megabytes" disabled><svg viewBox="0 0 8 4"><path d="M0 4h8L4 0z"/></svg></button><button aria-label="Fewer megabytes" disabled><svg viewBox="0 0 8 4"><path d="M0 0h8L4 4z"/></svg></button></span></span></div>
            <div class="field"><label for="th">Threads:</label><span class="spin"><input id="th" value="24" disabled><span class="arrows"><button aria-label="More threads" disabled><svg viewBox="0 0 8 4"><path d="M0 4h8L4 0z"/></svg></button><button aria-label="Fewer threads" disabled><svg viewBox="0 0 8 4"><path d="M0 0h8L4 4z"/></svg></button></span></span></div>
          </div>
          <label class="tick"><input type="checkbox" class="bold" checked>Beep on error</label>
          <label class="tick"><input type="checkbox" class="bold">Stop on error</label>
        </fieldset>
        <fieldset class="f-stat"><legend>Test status</legend>
          <p><span>Duration:</span><span>0:00:10:24</span></p>
          <p><span>Coverage</span><span>378 %</span></p>
          <p><span>Error count:</span><span class="err">1</span></p>
        </fieldset>
        <button class="stop">Stop</button>
      </div>
    </div>
  </section>
</main>
</body>
</html>
```
FILE: styles.css
```css
* { box-sizing: border-box; }
html, body { height: 100%; }
body { margin: 0; font-family: "Open Sans", "Noto Sans", sans-serif; font-size: 14px; line-height: 20px; color: #000; }
h1, p { margin: 0; font-size: inherit; font-weight: 400; }
button, input, select { font: inherit; color: inherit; }
button { padding: 0; border: 0; background: none; }
svg { display: block; flex: none; }
.sprites { position: absolute; width: 0; height: 0; }

.desktop { position: relative; width: 100%; height: 100vh; overflow: hidden; background: #008de8; }
.wallpaper { position: absolute; inset: 0; width: 100%; height: 100%; }
.icon-tops { position: absolute; left: 0; top: 0; width: 230px; height: 2px; }

.shortcut { position: absolute; width: 132px; display: flex; flex-direction: column; align-items: center; text-align: center; color: #fff; text-decoration: none; text-shadow: 1px 1px 2px #000, 0 1px 2px #000; }
.shortcut svg { width: 60px; height: 52px; margin-bottom: 4px; }
.shortcut-hidden { left: -19px; top: 1023px; }
.shortcut-mem { left: -19px; top: 1070px; }
.shortcut-riva { left: 131px; top: 1070px; }

/* Window chrome */
.window { position: absolute; display: flex; flex-direction: column; box-shadow: 0 3px 12px rgba(0, 0, 0, .4); background: #f0f0f0; }
.titlebar { display: flex; align-items: center; height: 37px; background: #fff; color: #999; }
.titlebar h1 { flex: 1; white-space: nowrap; }
.titlebar .app-icon { width: 20px; height: 20px; }
.controls { display: flex; height: 100%; }
.controls button { width: 58px; display: grid; place-items: center; color: #888; }
.controls svg { width: 12px; height: 12px; }

input[type="checkbox"] { appearance: none; flex: none; width: 16px; height: 16px; margin: 0; border: 1px solid #222; background: #fff; display: grid; place-items: center; }
input[type="checkbox"]:checked::before { content: ""; width: 12px; height: 10px; background: #222; clip-path: polygon(0 50%, 10% 40%, 37% 72%, 90% 5%, 100% 15%, 38% 95%); }
input.bold { width: 18px; }
input.bold:checked::before { clip-path: polygon(0 55%, 18% 38%, 38% 62%, 80% 0, 100% 10%, 42% 100%); }

/* HWiNFO */
.hwinfo { left: 0; top: 2px; width: 706px; border: 1px solid #1870b0; border-left: 0; border-bottom-color: #4a7890; font-family: "DejaVu Sans Condensed", "DejaVu Sans", sans-serif; font-size: 12px; }
.hwinfo .titlebar { border-bottom: 1px solid #7a8290; font-family: "Open Sans", "Noto Sans", sans-serif; font-size: 14px; gap: 7px; padding-left: 8px; }
.hwinfo .titlebar .app-icon { width: 18px; height: 18px; }
.sensor-area { display: flex; border-bottom: 1px solid #828790; background: #fff; }
.sensors { flex: 1; table-layout: fixed; width: 100%; border-spacing: 0; }
.c-tree { width: 47px; }
.c-name { width: 214px; }
.c-val { width: 100px; }
.sensors th { height: 26px; padding: 2px 6px 0 0; font-weight: 400; text-align: right; border-right: 1px solid #e5e5e5; line-height: 20px; }
.sensors th:first-child { text-align: left; padding-left: 6px; }
.sensors th:last-child, .sensors td:last-child, .sensors td:first-child { border-right: 0; }
.sensors td { height: 21px; padding: 0 6px 0 0; text-align: right; white-space: nowrap; border-right: 1px solid #ececec; border-bottom: 1px solid #ececec; line-height: 20px; }
.sensors td:first-child { padding: 0; position: relative; }
.sensors td:first-child svg { width: 16px; height: 18px; margin-left: 29px; }
.sensors td:first-child svg.expander { width: 12px; height: 14px; }
.sensors td:first-child svg.toggle { position: absolute; left: 7px; top: 4px; width: 14px; height: 12px; margin: 0; }
.sensors td:nth-child(2) { text-align: left; padding: 0 0 0 2px; }
.sensors tbody tr:nth-child(odd) td:nth-child(n+2):nth-child(-n+6) { background: #f0f0f0; }
.sensors tbody tr.group td:nth-child(n+2):nth-child(-n+6) { background: #dcdcdc; }
.group td:nth-child(2) { font-style: italic; }
.sensors .count td { padding-right: 11px; }
.sensors tfoot td { height: 14px; border-bottom: 0; line-height: 10px; }
.nested { display: inline-block; vertical-align: top; width: 20px; height: 20px; margin: 0 2px 0 -2px; padding: 1px 0 0 2px; background: #fff; }
.nested svg { width: 16px; height: 18px; }
.scrollbar { width: 22px; padding-right: 2px; display: flex; flex-direction: column; background: #f0f0f0; }
.scrollbar button { height: 22px; display: grid; place-items: center; }
.scrollbar button:first-child { margin-bottom: auto; }
.scrollbar svg { width: 10px; height: 8px; }
.thumb { height: 135px; background: #cdcdcd; }
.toolbar { display: flex; align-items: center; gap: 5px; padding: 9px 12px 14px 0; font-size: 13px; }
.toolbar button { width: 49px; height: 44px; border: 1px solid #adadad; background: #e1e1e1; display: grid; place-items: center; }
.toolbar button svg { width: 44px; height: 40px; }
.toolbar .first { width: 48px; border-left: 0; margin-right: -3px; }
.toolbar .off { background: #ccc; border-color: #bfbfbf; }
.toolbar .lookup { margin-right: 8px; }
.toolbar output { width: 69px; text-align: right; }
.fill { flex: 1; }

/* ZenTimings */
.zen { left: 725px; top: 6px; width: 486px; border: 1px solid #a8b4c0; background: #f2f2f2; font-size: 13px; color: #222; }
.zen .titlebar { height: 38px; gap: 6px; padding-left: 10px; background: #f2f2f2; color: #808080; font-size: 13px; }
.menu { display: flex; align-items: center; height: 32px; border-bottom: 1px solid #dcdcdc; padding: 0 12px 0 16px; gap: 20px; font-size: 14px; }
.menu .camera { margin-left: auto; }
.camera svg { width: 20px; height: 15px; }
.cpu-info { padding: 7px 15px 5px; line-height: 19px; border-bottom: 1px solid #dcdcdc; }
.timings-wrap { padding: 7px 0 5px; background: #f7f7f7; border-bottom: 1px solid #dcdcdc; }
.timings { table-layout: fixed; border-spacing: 0; width: 478px; }
.t1 { width: 80px; }
.t2 { width: 82px; }
.t3 { width: 104px; }
.timings th { height: 22px; padding: 0 4px 0 0; font-weight: 400; text-align: right; white-space: nowrap; }
.timings td { height: 22px; padding: 0; text-align: center; color: #0b4c86; white-space: nowrap; }
.timings .gap td { height: 12px; }
.module { padding: 6px 6px 7px; }
.picker { position: relative; width: 301px; }
.picker select { appearance: none; display: block; width: 100%; height: 28px; padding: 0 9px; border: 1px solid #bbb; border-radius: 0; background: #ececec; font-size: 13px; }
.picker svg { position: absolute; right: 9px; top: 12px; width: 8px; height: 4px; }

/* AIDA64 */
.aida { left: 1221px; right: 6px; top: 6px; border: 1px solid #1c4f9c; border-left-color: #1878cc; }
.aida .titlebar { gap: 6px; padding-left: 10px; }
.aida .titlebar .app-icon { width: 17px; }
.aida-panel { margin: 11px 11px 0 9px; padding: 15px 16px 16px 18px; border: 1px solid #dcdcdc; background: #fff; }
.aida-top { display: flex; margin-left: -5px; }
.stress { width: 202px; height: 148px; display: grid; grid-auto-rows: 1fr; }
.stress label { display: flex; align-items: center; gap: 3px; white-space: nowrap; }
.stress svg { width: 20px; height: 16px; margin-right: 6px; overflow: visible; }
.digits { font-size: 10px; text-anchor: middle; }
.log { flex: 1; margin: 2px 174px 0 0; height: 147px; border: 1px solid #828790; overflow: hidden; }
.log table { width: 100%; table-layout: fixed; border-spacing: 0; }
.l1 { width: 187px; }
.l2 { width: 352px; }
.log th, .log td { height: 24px; padding: 0 0 0 5px; text-align: left; font-weight: 400; border-right: 1px solid #e8e8e8; white-space: nowrap; }
.log td { border-bottom: 1px solid #ececec; }
.log th { height: 27px; padding-top: 2px; }
.log th:first-child, .log td:first-child { padding-left: 7px; }
.log th:last-child, .log td:last-child { border-right: 0; }
.log .sel td:not(:last-child) { background: #f0f0f0; }
.log .sel td:first-child { box-shadow: inset 5px 0 #fff; }
.tabs { display: flex; align-items: flex-end; height: 27px; margin-top: 8px; }
.tabs button { height: 25px; border: 1px solid #d9d9d9; border-left: 0; border-bottom: 0; background: #f0f0f0; line-height: 20px; }
.tabs .active { width: 106px; height: 28px; margin-bottom: -1px; border-left: 1px solid #d9d9d9; background: #fff; position: relative; }
.w94 { width: 94px; }
.tabs .w69 { width: 69px; padding-left: 6px; text-align: left; }
.tabs .w60 { width: 60px; padding-left: 6px; text-align: left; }
.graph-page { display: flex; border-top: 1px solid #dcdcdc; border-left: 1px solid #dcdcdc; padding: 2px 0 5px; }
.slider { width: 31px; padding: 9px 2px 9px 1px; display: flex; flex-direction: column; }
.slider-thumb { height: 12px; background: #0078d7; }
.slider-track { flex: 1; margin: 0 4px; border: 1px solid #d6d6d6; border-top: 0; background: #e7eaea; }
.graph { flex: 1; background: #000; }
.legend { display: flex; height: 30px; padding: 8px 0 0 216px; font-size: 12px; }
.legend label { display: flex; align-items: center; gap: 4px; white-space: nowrap; }
.l-mb { width: 111px; color: #ff0; }
.l-cpu { width: 56px; color: #a8c8ff; }
.l-ssd { color: #ffc878; }
.plot { width: 100%; height: auto; background: #000; shape-rendering: crispEdges; }
.trial { font-size: 58px; fill: #fff; text-anchor: middle; }
.axis { font-size: 12px; fill: #fff; }
.axis .end { text-anchor: end; }
.axis .mid { text-anchor: middle; }
.axis .blue { fill: #a8c8ff; }
.axis .yellow { fill: #ff0; }
.axis .orange { fill: #ffc878; }
.run-info { display: flex; align-items: center; margin-top: 18px; white-space: nowrap; }
.run-info output { height: 29px; padding-top: 4px; background: #000; color: #0f0; text-align: center; }
.i1 { width: 140px; }
.i2 { width: 96px; margin-left: 24px; }
.i3 { width: 107px; margin-left: 24px; }
.o1 { width: 99px; }
.o2 { width: 172px; }
.aida-buttons { display: flex; gap: 37px; padding: 11px 9px 9px; }
.aida-buttons div { display: flex; gap: 9px; }
.aida-buttons button { width: 91px; height: 26px; border: 1px solid #adadad; background: #e1e1e1; }
.aida-buttons button:disabled { background: #ccc; border-color: #bfbfbf; color: #8c8c8c; }
.aida-buttons .close { margin-left: auto; }

/* RAM Test */
.ram { left: 721px; top: 699px; width: 283px; border: 1px solid #3c444c; }
.ram .titlebar { color: #000; gap: 3px; padding-left: 10px; }
.ram .controls button { color: #000; }
.ram .controls button:disabled { color: #ccc; }
.ram-body { padding: 6px 6px 6px 6px; }
.ram-tabs { display: flex; align-items: flex-end; height: 28px; }
.ram-tabs button { height: 25px; border: 1px solid #acacac; border-left-width: 0; border-bottom: 0; background: #eee; }
.ram-tabs .active { width: 67px; height: 29px; margin-bottom: -1px; border-left-width: 1px; background: #fff; position: relative; }
.adv { width: 78px; }
.abt { width: 56px; }
.ram-page { padding: 4px 8px 9px; background: #fff; border: 1px solid #b4b4b4; }
fieldset { min-width: 0; margin: 0 2px 4px; padding: 6px 12px 0 11px; border: 1px solid #d5dfe5; border-radius: 4px; }
legend { margin-left: -4px; padding: 0 5px 0 3px; }
fieldset p { display: flex; justify-content: space-between; line-height: 24px; }
.f-sys { height: 85px; }
.f-set { height: 149px; }
.f-stat { height: 109px; }
.fields { display: grid; gap: 4px; padding-top: 1px; }
.field { display: flex; justify-content: space-between; align-items: center; }
.spin { display: flex; width: 111px; height: 27px; border: 1px solid #acacac; background: #f0f0f0; padding: 1px; }
.spin input { flex: 1; min-width: 0; border: 0; padding: 0 2px; background: none; text-align: right; color: #888; height: 22px; }
.arrows { display: flex; flex-direction: column; width: 14px; }
.arrows button { flex: 1; border: 1px solid #ddd; display: grid; place-items: center; }
.arrows svg { width: 8px; height: 4px; fill: #555; }
.tick { display: flex; align-items: center; gap: 6px; height: 25px; }
.err { color: #f00; }
.stop { width: 100%; height: 57px; margin-top: 4px; border: 1px solid #707070; background: #ddd; }
```
